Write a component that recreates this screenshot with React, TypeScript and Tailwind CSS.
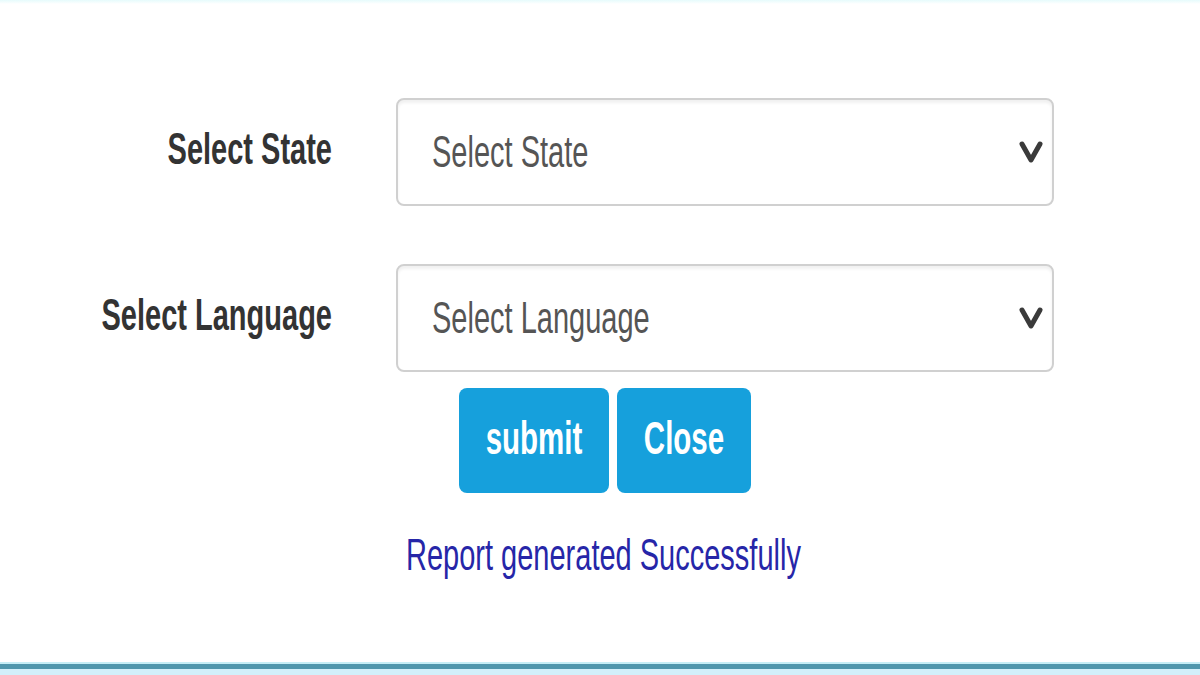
import React from "react";

const font = { fontFamily: '"Liberation Sans", Arial, sans-serif' };

function Tall({ children, className = "" }: { children: React.ReactNode; className?: string }) {
  return <span className={`inline-block scale-y-[1.55] whitespace-nowrap ${className}`}>{children}</span>;
}

function Chevron() {
  return (
    <svg width="26" height="30" viewBox="0 0 26 30" className="shrink-0">
      <polyline points="4,7 13,23 22,7" fill="none" stroke="#3a3a3a" strokeWidth="5" strokeLinecap="round" strokeLinejoin="round" />
    </svg>
  );
}

function FakeSelect({ text }: { text: string }) {
  return (
    <div className="ml-[64px] flex h-[108px] w-[658px] items-center justify-between rounded-[8px] border-2 border-[#d0d0d0] pl-[34px] pr-[8px] shadow-[inset_0_3px_3px_rgba(0,0,0,0.06)]">
      <Tall className="text-[29px] leading-none text-[#555555]">{text}</Tall>
      <Chevron />
    </div>
  );
}

function Row({ label, text }: { label: string; text: string }) {
  return (
    <div className="flex h-[108px] items-center">
      <div className="mb-[6px] flex w-[332px] justify-end">
        <Tall className="text-[29px] font-bold leading-none text-[#333333]">{label}</Tall>
      </div>
      <FakeSelect text={text} />
    </div>
  );
}

export default function App() {
  return (
    <div className="flex h-[675px] w-[1200px] flex-col bg-white" style={font}>
      <div className="h-[4px] bg-gradient-to-b from-[#e6fbfc] to-white" />
      <div className="flex flex-col pt-[94px]">
        <Row label="Select State" text="Select State" />
        <div className="h-[58px]" />
        <Row label="Select Language" text="Select Language" />
        <div className="mt-[16px] flex gap-[8px] pl-[459px]">
          <div className="flex h-[105px] w-[150px] items-center justify-center rounded-[8px] bg-[#16a0dc]">
            <Tall className="mb-[6px] text-[29.5px] font-bold leading-none text-white">submit</Tall>
          </div>
          <div className="flex h-[105px] w-[134px] items-center justify-center rounded-[8px] bg-[#16a0dc]">
            <Tall className="mb-[6px] text-[29.5px] font-bold leading-none text-white">Close</Tall>
          </div>
        </div>
        <div className="mt-[32px] flex h-[60px] items-center pl-[406px]">
          <Tall className="text-[29px] leading-none text-[#2626a8]">Report generated Successfully</Tall>
        </div>
      </div>
      <div className="flex-1" />
      <div className="h-[2px] bg-[#c6eef6]" />
      <div className="h-[5px] bg-[#4f97ad]" />
      <div className="h-[6px] bg-[#d2effa]" />
    </div>
  );
}
